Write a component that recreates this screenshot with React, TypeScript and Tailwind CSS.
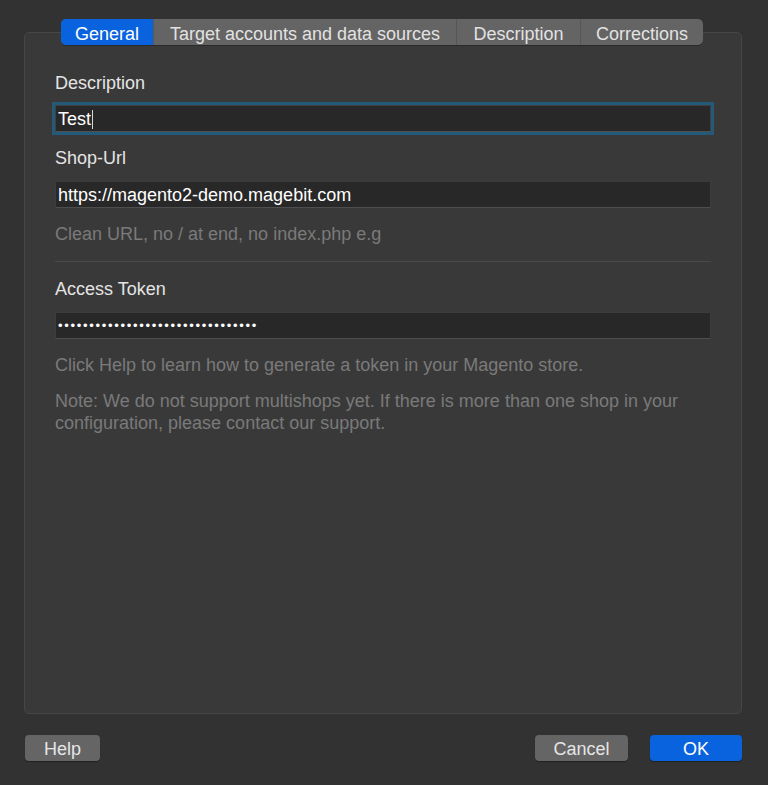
import React from "react";

export default function App() {
  const font = { fontFamily: '"Liberation Sans", Arial, sans-serif' };
  const tabs = [
    { t: "General", w: "w-[92px]" },
    { t: "Target accounts and data sources", w: "w-[303px]" },
    { t: "Description", w: "w-[124px]" },
    { t: "Corrections", w: "w-[123px]" },
  ];
  return (
    <div style={font} className="w-[768px] h-[785px] bg-[#323232] text-[18px] text-[#e4e4e4] flex flex-col overflow-hidden">
      <div className="pt-[19px] pl-[24px] pr-[26px] flex flex-col">
        <div className="flex justify-center relative z-10 pr-[2px]">
          <div className="flex h-[26px] rounded-[5px] overflow-hidden bg-[#646464] shadow-[0_1px_0_#2a2a2a]">
            {tabs.map((x, i) => (
              <div
                key={x.t}
                className={
                  i === 0
                    ? `${x.w} flex items-center justify-center pt-[3px] bg-[#0a63de] text-white leading-none`
                    : `${x.w} flex items-center justify-center pt-[3px] text-[#e2e2e2] leading-none border-l border-[#575757]`
                }
              >
                {x.t}
              </div>
            ))}
          </div>
        </div>
        <div className="-mt-[13px] h-[682px] rounded-[5px] border border-[#464646] bg-[#393939] pt-[39px] px-[30px] flex flex-col">
          <div className="leading-[22px] h-[22px]">Description</div>
          <div className="mt-[11px] h-[27px] bg-[#282828] border border-[#404040] border-b-[#505050] shadow-[0_0_0_3px_#245a79] flex items-center pl-[2px] pt-[1px] text-white">
            <span>Test</span>
            <span className="inline-block w-[1px] h-[19px] bg-[#d8d8d8] ml-[1px]" />
          </div>
          <div className="mt-[15px] leading-[22px] h-[22px]">Shop-Url</div>
          <div className="mt-[12px] h-[27px] bg-[#282828] border border-[#3c3c3c] border-b-[#4e4e4e] flex items-center pl-[2px] pt-[1px] text-white">
            https://magento2-demo.magebit.com
          </div>
          <div className="mt-[15px] leading-[22px] h-[22px] text-[#7a7a7a]">Clean URL, no / at end, no index.php e.g</div>
          <div className="mt-[16px] h-[1px] bg-[#4a4a4a]" />
          <div className="mt-[16px] leading-[22px] h-[22px]">Access Token</div>
          <div className="mt-[12px] h-[27px] bg-[#282828] border border-[#3c3c3c] border-b-[#4e4e4e] flex items-center pl-[2px] text-white">
            <span className="text-[13px] tracking-[1.7px] leading-none">{"•".repeat(32)}</span>
          </div>
          <div className="mt-[15px] leading-[22px] text-[#7a7a7a]">Click Help to learn how to generate a token in your Magento store.</div>
          <div className="mt-[14px] leading-[22px] text-[#7a7a7a] w-[660px]">
            Note: We do not support multishops yet. If there is more than one shop in your configuration, please contact our support.
          </div>
        </div>
      </div>
      <div className="mt-[21px] pl-[25px] pr-[26px] flex items-center">
        <button className="w-[75px] h-[26px] pt-[2px] rounded-[4px] bg-[#656565] text-[#e6e6e6] shadow-[0_1px_1px_rgba(0,0,0,0.35)] leading-none">Help</button>
        <div className="flex-1" />
        <button className="w-[93px] h-[26px] pt-[2px] rounded-[4px] bg-[#656565] text-[#e6e6e6] shadow-[0_1px_1px_rgba(0,0,0,0.35)] leading-none">Cancel</button>
        <button className="ml-[22px] w-[92px] h-[26px] pt-[2px] rounded-[4px] bg-[#0a63de] text-white shadow-[0_1px_1px_rgba(0,0,0,0.35)] leading-none">OK</button>
      </div>
    </div>
  );
}
